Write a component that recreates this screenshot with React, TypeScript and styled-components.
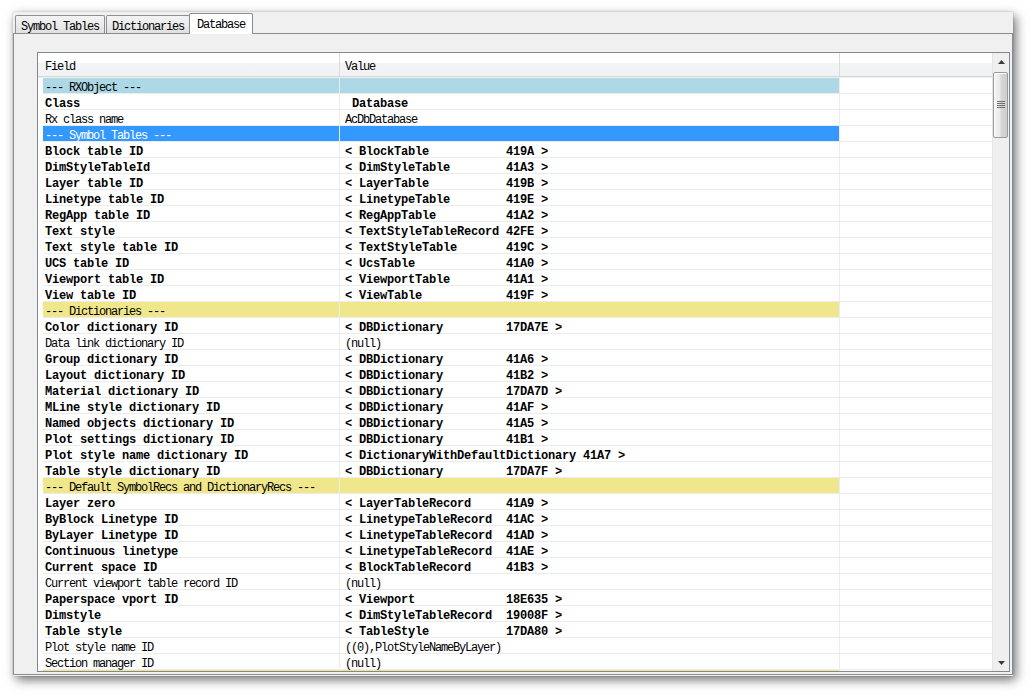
import React from "react";
import styled, { createGlobalStyle } from "styled-components";

type Tone = "blue" | "highlight" | "yellow";

type Row =
    | { kind: "section"; label: string; tone: Tone }
    | { kind: "item"; field: string; value: string; bold?: boolean };

const ref = (name: string, id: string) => `< ${name.padEnd(20)} ${id} >`;

const section = (label: string, tone: Tone): Row => ({
    kind: "section",
    label: label ? `--- ${label} ---` : "",
    tone,
});
const item = (field: string, value: string, bold = true): Row => ({ kind: "item", field, value, bold });

// the last section row is scrolled almost out of view, only its top edge shows
const rows: Row[] = [
    section("RXObject", "blue"),
    item("Class", " Database"),
    item("Rx class name", "AcDbDatabase", false),
    section("Symbol Tables", "highlight"),
    item("Block table ID", ref("BlockTable", "419A")),
    item("DimStyleTableId", ref("DimStyleTable", "41A3")),
    item("Layer table ID", ref("LayerTable", "419B")),
    item("Linetype table ID", ref("LinetypeTable", "419E")),
    item("RegApp table ID", ref("RegAppTable", "41A2")),
    item("Text style", ref("TextStyleTableRecord", "42FE")),
    item("Text style table ID", ref("TextStyleTable", "419C")),
    item("UCS table ID", ref("UcsTable", "41A0")),
    item("Viewport table ID", ref("ViewportTable", "41A1")),
    item("View table ID", ref("ViewTable", "419F")),
    section("Dictionaries", "yellow"),
    item("Color dictionary ID", ref("DBDictionary", "17DA7E")),
    item("Data link dictionary ID", "(null)", false),
    item("Group dictionary ID", ref("DBDictionary", "41A6")),
    item("Layout dictionary ID", ref("DBDictionary", "41B2")),
    item("Material dictionary ID", ref("DBDictionary", "17DA7D")),
    item("MLine style dictionary ID", ref("DBDictionary", "41AF")),
    item("Named objects dictionary ID", ref("DBDictionary", "41A5")),
    item("Plot settings dictionary ID", ref("DBDictionary", "41B1")),
    item("Plot style name dictionary ID", ref("DictionaryWithDefaultDictionary", "41A7")),
    item("Table style dictionary ID", ref("DBDictionary", "17DA7F")),
    section("Default SymbolRecs and DictionaryRecs", "yellow"),
    item("Layer zero", ref("LayerTableRecord", "41A9")),
    item("ByBlock Linetype ID", ref("LinetypeTableRecord", "41AC")),
    item("ByLayer Linetype ID", ref("LinetypeTableRecord", "41AD")),
    item("Continuous linetype", ref("LinetypeTableRecord", "41AE")),
    item("Current space ID", ref("BlockTableRecord", "41B3")),
    item("Current viewport table record ID", "(null)", false),
    item("Paperspace vport ID", ref("Viewport", "18E635")),
    item("Dimstyle", ref("DimStyleTableRecord", "19008F")),
    item("Table style", ref("TableStyle", "17DA80")),
    item("Plot style name ID", "((0),PlotStyleNameByLayer)", false),
    item("Section manager ID", "(null)", false),
    section("", "yellow"),
];

const toneColors: Record<Tone, string> = {
    blue: "#add8e6",
    highlight: "#3399ff",
    yellow: "#f0e68c",
};

const GlobalStyle = createGlobalStyle`
    html, body {
        margin: 0;
        padding: 0;
        background: #ffffff;
    }
    body {
        font-family: "Liberation Mono", "DejaVu Sans Mono", monospace;
        font-size: 12px;
        letter-spacing: -1.2px;
        color: #000;
    }
`;

const Page = styled.div`
    width: 1033px;
    height: 696px;
    padding: 12px 0 0 13px;
    box-sizing: border-box;
    overflow: hidden;
`;

const Window = styled.div`
    width: 1000px;
    height: 664px;
    box-sizing: border-box;
    padding-bottom: 1px;
    display: flex;
    flex-direction: column;
    background: #f0f0f0;
    box-shadow: 3px 4px 10px rgba(0, 0, 0, 0.55), 0 0 2px rgba(0, 0, 0, 0.2);
`;

const TabStrip = styled.div`
    height: 21px;
    display: flex;
    align-items: flex-end;
    padding-left: 2px;
`;

const Tab = styled.div<{ $active?: boolean }>`
    position: relative;
    z-index: 1;
    box-sizing: border-box;
    height: ${p => (p.$active ? "21px" : "18px")};
    margin: ${p => (p.$active ? "0 0 -1px -2px" : "0 1px 0 0")};
    padding: ${p => (p.$active ? "4px 7px 0" : "4px 5px 0")};
    line-height: 14px;
    border: 1px solid ${p => (p.$active ? "#898c95" : "#8c8e94")};
    border-bottom: none;
    border-radius: 2px 2px 0 0;
    background: ${p => (p.$active ? "#ffffff" : "linear-gradient(#f3f3f3, #ebebeb 50%, #e0e0e0)")};
    white-space: pre;
`;

const Panel = styled.div`
    flex: 1;
    display: flex;
    min-height: 0;
    border: 1px solid #898c95;
    padding: 18px 2px 2px 23px;
`;

const Grid = styled.div`
    flex: 1;
    display: flex;
    min-width: 0;
    border: 1px solid #828790;
    background: #ffffff;
    overflow: hidden;
`;

const GridBody = styled.div`
    flex: 1;
    min-width: 0;
    display: flex;
    flex-direction: column;
    overflow: hidden;
`;

const HeaderRow = styled.div`
    flex: none;
    height: 25px;
    box-sizing: border-box;
    display: grid;
    grid-template-columns: 302px 500px 1fr;
    border-bottom: 1px solid #f0f0f0;
    box-shadow: inset 0 -1px 0 #d5d5d5;
    background: linear-gradient(#ffffff 0, #ffffff 40%, #f3f4f6 42%, #f1f2f4 100%);
`;

const HeaderCell = styled.div<{ $pad: number; $last?: boolean }>`
    margin-bottom: 1px;
    padding: 7px 0 0 ${p => p.$pad}px;
    line-height: 14px;
    border-right: ${p => (p.$last ? "none" : "1px solid #dcdcdc")};
`;

const Rows = styled.div`
    flex: 1;
    padding-left: 5px;
    overflow: hidden;
`;

const RowLine = styled.div`
    display: grid;
    grid-template-columns: 297px 500px 1fr;
    grid-template-rows: 16px;
    height: 16px;
`;

const Cell = styled.div<{ $tone?: Tone; $bold?: boolean; $pad: number; $last?: boolean }>`
    box-sizing: border-box;
    height: 16px;
    padding: 3px 0 0 ${p => p.$pad}px;
    line-height: 14px;
    white-space: pre;
    border-bottom: 1px solid #ececec;
    border-right: ${p => (p.$last ? "none" : "1px solid #ececec")};
    background: ${p => (p.$tone ? toneColors[p.$tone] : "#ffffff")};
    color: ${p => (p.$tone === "highlight" ? "#ffffff" : "#000000")};
    font-weight: ${p => (p.$bold ? 700 : 400)};
    letter-spacing: ${p => (p.$bold ? "-0.2px" : "-1.2px")};
`;

const ScrollBar = styled.div`
    flex: none;
    width: 17px;
    box-sizing: border-box;
    display: flex;
    flex-direction: column;
    border-left: 1px solid #e6e6e6;
    background: #efefef;
`;

const ArrowButton = styled.div`
    flex: none;
    height: 17px;
    display: flex;
    align-items: center;
    justify-content: center;
`;

const Track = styled.div`
    flex: 1;
    padding: 2px 1px 0 0;
`;

const Thumb = styled.div`
    height: 66px;
    box-sizing: border-box;
    display: flex;
    align-items: center;
    justify-content: center;
    border: 1px solid #9a9a9a;
    border-radius: 2px;
    background: linear-gradient(to right, #f6f6f6, #e9e9e9 45%, #d6d6d6 55%, #cfcfcf);
    box-shadow: inset 1px 1px 0 #ffffff;
`;

const Arrow: React.FC<{ down?: boolean }> = ({ down }) => (
    <svg width="7" height="4" viewBox="0 0 7 4">
        <polygon points={down ? "0,0 7,0 3.5,4" : "3.5,0 7,4 0,4"} fill="#3c3c3c" />
    </svg>
);

const Grip: React.FC = () => (
    <svg width="8" height="8" viewBox="0 0 8 8">
        {[0, 2, 4, 6].map(y => (
            <rect key={y} x="0" y={y} width="8" height="1" fill="#6e6e6e" />
        ))}
    </svg>
);

const DataRow: React.FC<{ row: Row }> = ({ row }) => {
    if (row.kind === "section") {
        return (
            <RowLine>
                <Cell $tone={row.tone} $pad={2}>
                    {row.label}
                </Cell>
                <Cell $tone={row.tone} $pad={5} />
                <Cell $pad={0} $last />
            </RowLine>
        );
    }
    return (
        <RowLine>
            <Cell $bold={row.bold} $pad={2}>
                {row.field}
            </Cell>
            <Cell $bold={row.bold} $pad={5}>
                {row.value}
            </Cell>
            <Cell $pad={0} $last />
        </RowLine>
    );
};

const App: React.FC = () => (
    <>
        <GlobalStyle />
        <Page>
            <Window>
                <TabStrip>
                    <Tab>Symbol Tables</Tab>
                    <Tab>Dictionaries</Tab>
                    <Tab $active>Database</Tab>
                </TabStrip>
                <Panel>
                    <Grid>
                        <GridBody>
                            <HeaderRow>
                                <HeaderCell $pad={7}>Field</HeaderCell>
                                <HeaderCell $pad={5}>Value</HeaderCell>
                                <HeaderCell $pad={0} $last />
                            </HeaderRow>
                            <Rows>
                                {rows.map((row, i) => (
                                    <DataRow key={i} row={row} />
                                ))}
                            </Rows>
                        </GridBody>
                        <ScrollBar>
                            <ArrowButton>
                                <Arrow />
                            </ArrowButton>
                            <Track>
                                <Thumb>
                                    <Grip />
                                </Thumb>
                            </Track>
                            <ArrowButton>
                                <Arrow down />
                            </ArrowButton>
                        </ScrollBar>
                    </Grid>
                </Panel>
            </Window>
        </Page>
    </>
);

export default App;
